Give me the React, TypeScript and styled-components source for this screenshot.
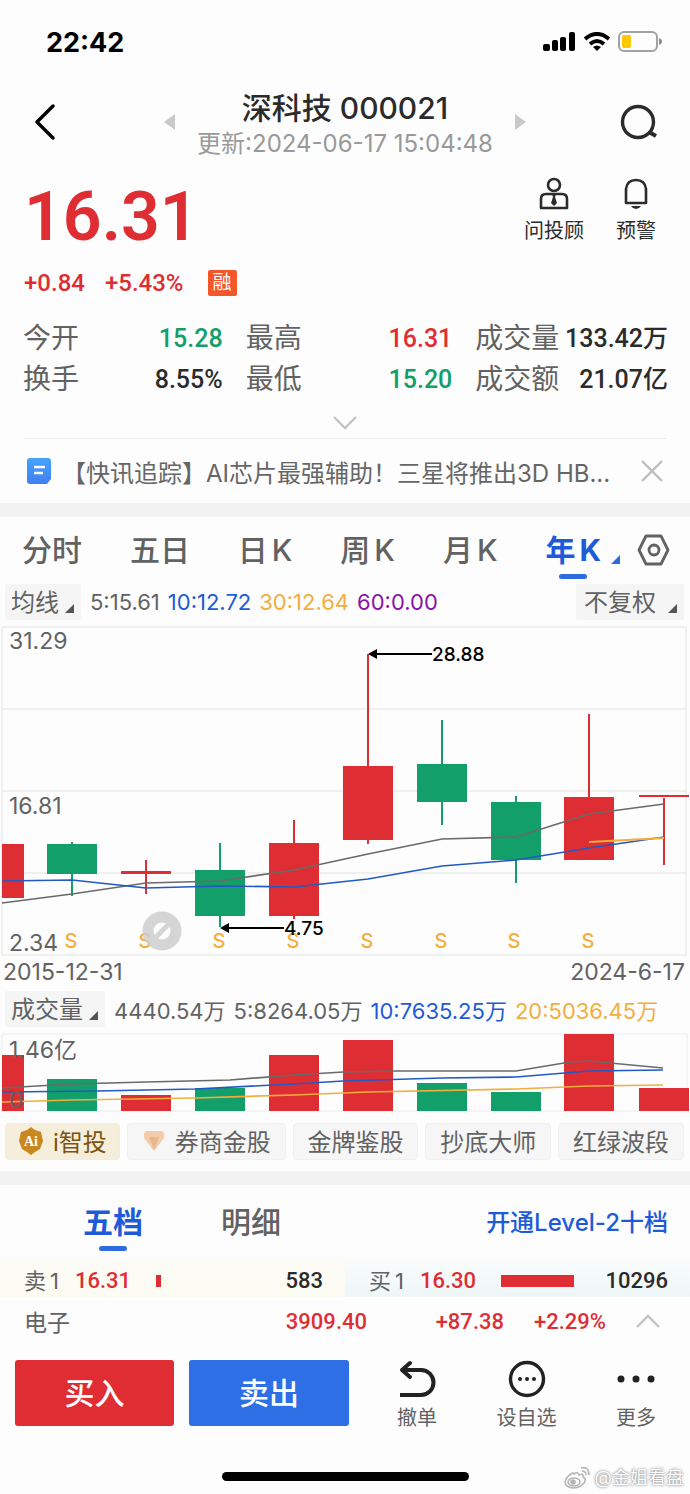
import React from 'react';
import styled, { createGlobalStyle } from 'styled-components';

const RED = '#df2e33';
const GREEN = '#129f69';
const BLUE = '#1e5bd8';
const ORANGE = '#f3ae3d';
const GRAY = '#626262';
const DARK = '#2b2b2b';
const SANS = "Inter, 'Noto Sans CJK SC', sans-serif";
const DIGITS = "Roboto, 'Noto Sans CJK SC', sans-serif";

const GlobalStyle = createGlobalStyle`
  * { box-sizing: border-box; }
  body { margin: 0; background: #fdfdfd; font-family: ${SANS}; color: ${DARK}; }
  button, select { font: inherit; color: inherit; border: 0; background: none; padding: 0; margin: 0; cursor: pointer; }
  a { color: inherit; text-decoration: none; }
  dl, dt, dd, ul, h1, p { margin: 0; padding: 0; }
  svg { display: block; flex: none; }
`;

const Page = styled.div`
  position: relative;
  display: flex;
  flex-direction: column;
  width: 100%;
`;

const StatusBar = styled.div`
  display: flex;
  align-items: center;
  justify-content: space-between;
  height: 84px;
  padding: 0 27px 0 46px;
  color: #000;
`;
const Clock = styled.time`
  font-size: 27px;
  font-weight: 700;
`;
const StatusIcons = styled.div`
  display: flex;
  align-items: center;
  gap: 8px;
`;

const Header = styled.header`
  display: flex;
  align-items: center;
  justify-content: space-between;
  height: 76px;
  padding: 0 32px;
`;
const IconButton = styled.button`
  display: flex;
  align-items: center;
  justify-content: center;
`;
const TitleGroup = styled.div`
  display: flex;
  align-items: center;
  justify-content: space-between;
  width: 364px;
`;
const TitleText = styled.div`
  display: flex;
  flex-direction: column;
  align-items: center;
  padding-top: 6px;
`;
const Title = styled.h1`
  font-size: 30px;
  line-height: 38px;
  font-weight: 500;
`;
const Updated = styled.p`
  font-size: 24px;
  line-height: 34px;
  color: #999;
`;

const Quote = styled.section`
  display: flex;
  justify-content: space-between;
  height: 158px;
  padding: 17px 34px 0 24px;
`;
const Price = styled.div`
  font-family: ${DIGITS};
  font-size: 68px;
  line-height: 80px;
  font-weight: 600;
  color: ${RED};
`;
const Changes = styled.div`
  display: flex;
  align-items: center;
  gap: 20px;
  margin-top: 10px;
  font-family: ${DIGITS};
  font-size: 24px;
  line-height: 32px;
  font-weight: 500;
  color: ${RED};
`;
const MarginBadge = styled.span`
  margin-left: 4px;
  padding: 0 5px;
  border-radius: 2px;
  background: #f4552b;
  color: #fff;
  font-size: 19px;
  line-height: 26px;
  font-weight: 400;
`;
const QuoteActions = styled.div`
  display: flex;
  align-items: flex-start;
  gap: 32px;
`;
const ActionButton = styled.button<{ $tone?: string }>`
  display: flex;
  flex-direction: column;
  align-items: center;
  gap: 7px;
  font-size: 20px;
  line-height: 26px;
  color: ${(p) => p.$tone || DARK};
`;

const Stats = styled.dl`
  display: grid;
  grid-template-columns: 200fr 207fr 193fr;
  column-gap: 23px;
  padding: 0 22px 0 23px;
`;
const Stat = styled.div`
  display: flex;
  justify-content: space-between;
  height: 41px;
  font-size: 28px;
  line-height: 41px;
  white-space: nowrap;
  dt { color: ${GRAY}; }
`;
const StatValue = styled.dd<{ $color?: string }>`
  font-family: ${DIGITS};
  font-size: 25px;
  font-weight: 500;
  color: ${(p) => p.$color || DARK};
`;
const Expand = styled.button`
  display: flex;
  justify-content: center;
  height: 39px;
  margin: 0 24px;
  padding-top: 16px;
  border-bottom: 1px solid #ececec;
`;

const News = styled.div`
  display: flex;
  align-items: center;
  height: 64px;
  padding: 0 26px;
`;
const Headline = styled.a`
  flex: 1;
  min-width: 0;
  margin: 0 8px 0 10px;
  overflow: hidden;
  text-overflow: ellipsis;
  white-space: nowrap;
  font-size: 24px;
  color: #666;
`;
const Divider = styled.div`
  height: 14px;
  background: #f2f2f2;
`;

const PeriodTabs = styled.nav`
  display: flex;
  align-items: center;
  justify-content: space-between;
  height: 65px;
  padding: 0 20px 0 22px;
`;
const Tab = styled.button<{ $active?: boolean }>`
  position: relative;
  display: flex;
  gap: 4px;
  font-size: 30px;
  line-height: 58px;
  font-weight: ${(p) => (p.$active ? 700 : 500)};
  color: ${(p) => (p.$active ? BLUE : GRAY)};
  &::after {
    content: '';
    display: ${(p) => (p.$active ? 'block' : 'none')};
    position: absolute;
    left: 50%;
    bottom: 0;
    width: 28px;
    height: 5px;
    margin-left: -14px;
    border-radius: 3px;
    background: #2f6be0;
  }
`;
const TabTools = styled.div`
  display: flex;
  align-items: center;
  gap: 10px;
`;
const Corner = styled.span<{ $color?: string }>`
  width: 0;
  height: 0;
  border-left: 9px solid transparent;
  border-bottom: 9px solid ${(p) => p.$color || '#555'};
  ${TabTools} > & { margin-top: 20px; }
`;

const Legend = styled.div`
  display: flex;
  align-items: center;
  height: 44px;
  padding: 0 6px 4px 5px;
`;
const Picker = styled.label<{ $wide?: boolean }>`
  position: relative;
  display: flex;
  border-radius: 3px;
  background: #f5f5f5;
  color: ${GRAY};
  select {
    appearance: none;
    height: 36px;
    padding: 0 ${(p) => (p.$wide ? 28 : 22)}px 0 ${(p) => (p.$wide ? 8 : 6)}px;
    font-size: 24px;
    outline: none;
  }
  ${Corner} {
    position: absolute;
    right: 7px;
    bottom: 7px;
    pointer-events: none;
  }
`;
const LegendValues = styled.div`
  display: flex;
  flex: 1;
  gap: 8px;
  margin-left: 9px;
  font-size: 22px;
  white-space: nowrap;
`;
const LegendValue = styled.span<{ $color: string }>`
  color: ${(p) => p.$color};
`;

const Chart = styled.svg`
  width: 100%;
  height: auto;
  font-family: ${SANS};
`;
const DateAxis = styled.div`
  display: flex;
  justify-content: space-between;
  height: 33px;
  padding: 0 5px 0 3px;
  font-size: 23px;
  line-height: 32px;
  color: ${GRAY};
`;

const Chips = styled.div`
  display: flex;
  justify-content: space-between;
  gap: 7px;
  height: 59px;
  padding: 11px 6px 11px 5px;
`;
const Chip = styled.button<{ $gold?: boolean }>`
  display: flex;
  flex: ${(p) => (p.$gold ? '0 0 auto' : '1 0 auto')};
  align-items: center;
  justify-content: center;
  gap: 9px;
  height: 37px;
  padding: 0 12px 2px;
  border: 1px solid ${(p) => (p.$gold ? '#f3edd6' : '#f0f0f0')};
  border-radius: 4px;
  background: ${(p) => (p.$gold ? '#f4eedb' : '#f6f6f6')};
  color: ${(p) => (p.$gold ? '#7b5414' : GRAY)};
  font-size: 24px;
`;

const BookTabs = styled.nav`
  display: flex;
  align-items: center;
  gap: 78px;
  height: 74px;
  padding: 0 22px 0 83px;
`;
const BookLink = styled.a`
  margin-left: auto;
  padding-bottom: 4px;
  font-size: 24px;
  font-weight: 500;
  color: ${BLUE};
`;
const BookRow = styled.div`
  display: grid;
  grid-template-columns: 1fr 1fr;
`;
const Side = styled.div<{ $buy?: boolean }>`
  display: grid;
  grid-template-columns: 51px 81px 1fr auto;
  align-items: center;
  height: 38px;
  padding: 6px 22px 0 24px;
  background: ${(p) => (p.$buy ? 'linear-gradient(#fafcfc, #eef6f8)' : 'linear-gradient(#fcfcf6, #fcfbf2)')};
  font-family: ${DIGITS};
  font-size: 22px;
  line-height: 30px;
  font-weight: 500;
`;
const SideLabel = styled.span`
  display: flex;
  gap: 4px;
  font-family: ${SANS};
  font-weight: 400;
  color: ${GRAY};
`;
const RedText = styled.span`
  color: ${RED};
`;
const Depth = styled.span`
  height: 12px;
  background: ${RED};
`;

const Sector = styled.div`
  display: grid;
  grid-template-columns: 1fr 137px 102px 54px;
  align-items: center;
  height: 50px;
  padding: 0 30px 2px 24px;
  font-family: ${DIGITS};
  font-size: 22px;
  font-weight: 500;
  text-align: right;
  ${IconButton} { justify-content: flex-end; }
`;
const SectorNames = styled.div`
  display: flex;
  align-items: center;
  justify-content: space-between;
  a { font-family: ${SANS}; font-size: 23px; font-weight: 400; color: ${GRAY}; }
`;

const Toolbar = styled.div`
  display: grid;
  grid-template-columns: 159px 160px 1fr;
  gap: 15px;
  height: 110px;
  padding: 13px 34px 0 15px;
`;
const TradeButton = styled.button<{ $color: string }>`
  height: 66px;
  padding-bottom: 4px;
  border-radius: 3px;
  background: ${(p) => p.$color};
  color: #fff;
  font-size: 30px;
  font-weight: 500;
`;
const Tools = styled.div`
  display: flex;
  justify-content: space-between;
  height: 72px;
  padding-left: 33px;
`;
const HomeArea = styled.footer`
  display: flex;
  align-items: flex-end;
  justify-content: center;
  height: 38px;
  padding-bottom: 14px;
`;
const HomeIndicator = styled.div`
  width: 247px;
  height: 9px;
  border-radius: 5px;
  background: #000;
`;
const Credit = styled.div`
  position: absolute;
  right: 6px;
  bottom: 4px;
  display: flex;
  align-items: center;
  gap: 4px;
  color: #fff;
  font-size: 18px;
  line-height: 26px;
  text-shadow: 0 0 3px #888, 0 0 1px #999;
`;

type Candle = { x: number; top: number; bottom: number; high: number; low: number; up: boolean };

const candles: Candle[] = [
  { x: -1, top: 218, bottom: 272, high: 218, low: 272, up: true },
  { x: 72, top: 218, bottom: 248, high: 216, low: 270, up: false },
  { x: 146, top: 245, bottom: 248, high: 234, low: 268, up: true },
  { x: 220, top: 244, bottom: 290, high: 217, low: 301, up: false },
  { x: 294, top: 217, bottom: 290, high: 194, low: 293, up: true },
  { x: 368, top: 140, bottom: 214, high: 28, low: 218, up: true },
  { x: 442, top: 138, bottom: 176, high: 94, low: 199, up: false },
  { x: 516, top: 176, bottom: 234, high: 170, low: 257, up: false },
  { x: 589, top: 171, bottom: 234, high: 88, low: 234, up: true },
  { x: 664, top: 169, bottom: 171, high: 172, low: 239, up: true },
];

const volumes = [
  { x: -1, top: 22, up: true },
  { x: 72, top: 46, up: false },
  { x: 146, top: 62, up: true },
  { x: 220, top: 55, up: false },
  { x: 294, top: 22, up: true },
  { x: 368, top: 7, up: true },
  { x: 442, top: 50, up: false },
  { x: 516, top: 59, up: false },
  { x: 589, top: 1, up: true },
  { x: 664, top: 55, up: true },
];

const signals = [71, 145, 219, 293, 367, 441, 514, 588];

function PriceChart() {
  return (
    <Chart viewBox="0 0 690 330" role="img" aria-label="年K线图">
      <g stroke="#ececec" strokeWidth="1.5" fill="none">
        <path d="M2 1H687M2 83H687M2 165H687M2 247H687M2 329H687M2 1V329M686 1V329" />
      </g>
      <g fontSize="23" fill={GRAY}>
        <text x="9" y="23">31.29</text>
        <text x="9" y="188">16.81</text>
        <text x="9" y="325">2.34</text>
      </g>
      {candles.map((c) => (
        <g key={c.x} fill={c.up ? RED : GREEN}>
          <rect x={Math.max(c.x - 25, 2)} y={c.top} width={c.x < 0 ? 22 : 50} height={c.bottom - c.top} />
          {c.x > 0 && <rect x={c.x - 1} y={c.high} width="2" height={c.low - c.high} />}
        </g>
      ))}
      <g fill="none" strokeWidth="1.7">
        <path stroke="#6a6a6a" d="M2 277L72 268L146 257L220 255L294 244L368 228L442 213L516 211L589 188L664 178" />
        <path stroke="#2259c4" d="M2 255L72 254L146 262L220 260L294 261L368 253L442 240L516 234L589 222L664 211" />
        <path stroke={ORANGE} strokeWidth="2" d="M589 216L664 212" />
      </g>
      <g fontSize="20" fontWeight="500" fill={ORANGE} textAnchor="middle">
        {signals.map((x) => (
          <text key={x} x={x} y="322">S</text>
        ))}
      </g>
      <g opacity="0.85">
        <circle cx="162" cy="305" r="14" fill="#fdfdfd" fillOpacity="0.7" stroke="#cfcfcf" strokeWidth="11" />
        <path d="M155 312L169 298" stroke="#cfcfcf" strokeWidth="5" />
      </g>
      <g stroke="#000" strokeWidth="2">
        <path d="M374 28H432M226 302H284" />
        <path d="M368 28L377 23V33ZM220 302L229 297V307Z" stroke="none" />
      </g>
      <g fontSize="19" fontWeight="500" fill="#000">
        <text x="432" y="35">28.88</text>
        <text x="284" y="309">4.75</text>
      </g>
    </Chart>
  );
}

function VolumeChart() {
  return (
    <Chart viewBox="0 0 690 79" role="img" aria-label="成交量图">
      <path d="M2 1H687V78H2Z" stroke="#ececec" fill="none" />
      {volumes.map((v) => (
        <rect
          key={v.x}
          x={Math.max(v.x - 25, 2)}
          y={v.top}
          width={v.x < 0 ? 22 : 50}
          height={78 - v.top}
          fill={v.up ? RED : GREEN}
        />
      ))}
      <g fill="none" strokeWidth="1.7">
        <path stroke="#6a6a6a" d="M2 55L72 51L146 49L230 47L294 42L343 39L393 38L516 38L570 29L589 28L663 35" />
        <path stroke="#2259c4" d="M2 59L97 58L195 56L294 51L343 48L442 45L516 44L589 38L663 37" />
        <path stroke={ORANGE} d="M2 69L72 67L195 65L294 62L368 59L516 56L589 53L663 52" />
      </g>
      <g fontSize="23" fill={GRAY}>
        <text x="9" y="25">1.46亿</text>
        <text x="9" y="75">0</text>
      </g>
    </Chart>
  );
}

export default function App() {
  return (
    <Page>
      <GlobalStyle />
      <StatusBar>
        <Clock>22:42</Clock>
        <StatusIcons>
          <svg width="33" height="20" viewBox="0 0 33 20">
            <rect x="0" y="12" width="7" height="7" rx="2" />
            <rect x="9" y="8" width="6" height="11" rx="2" />
            <rect x="17" y="5" width="6" height="14" rx="2" />
            <rect x="26" y="0" width="6" height="19" rx="2" />
          </svg>
          <svg width="26" height="20" viewBox="0 0 26 20" fill="none" stroke="#000" strokeWidth="4">
            <path d="M1 7Q13 -3 25 7" />
            <path d="M6 12Q13 6 20 12" />
            <path d="M9 15Q13 12 17 15L13 19Z" fill="#000" stroke="none" />
          </svg>
          <svg width="45" height="22" viewBox="0 0 45 22">
            <rect x="1" y="1" width="38" height="19" rx="5" fill="none" stroke="#a2a2a2" strokeWidth="2" />
            <rect x="4" y="4" width="9" height="13" rx="2" fill="#fcc800" />
            <path d="M41 7Q44 8 44 11Q44 13 41 14Z" fill="#8c8c8c" />
          </svg>
        </StatusIcons>
      </StatusBar>

      <Header>
        <IconButton aria-label="返回">
          <svg width="38" height="36" viewBox="0 0 38 36" fill="none" stroke="#000" strokeWidth="3.4" strokeLinecap="round" strokeLinejoin="round">
            <path d="M21 2L5 18L21 34" />
          </svg>
        </IconButton>
        <TitleGroup>
          <IconButton aria-label="上一只">
            <svg width="12" height="18" viewBox="0 0 12 18" fill="#c9c9c9"><path d="M12 1V17L1 9Z" /></svg>
          </IconButton>
          <TitleText>
            <Title>深科技 000021</Title>
            <Updated>更新:2024-06-17 15:04:48</Updated>
          </TitleText>
          <IconButton aria-label="下一只">
            <svg width="12" height="18" viewBox="0 0 12 18" fill="#c9c9c9"><path d="M0 1V17L11 9Z" /></svg>
          </IconButton>
        </TitleGroup>
        <IconButton aria-label="搜索">
          <svg width="38" height="36" viewBox="0 0 38 36" fill="none" stroke={DARK} strokeWidth="3.4">
            <circle cx="18" cy="18" r="15.5" />
            <path d="M29 28L36 32" strokeWidth="4" />
          </svg>
        </IconButton>
      </Header>

      <Quote>
        <div>
          <Price>16.31</Price>
          <Changes>
            <span>+0.84</span>
            <span>+5.43%</span>
            <MarginBadge>融</MarginBadge>
          </Changes>
        </div>
        <QuoteActions>
          <ActionButton>
            <svg width="30" height="34" viewBox="0 0 30 34" fill="none" stroke={DARK} strokeWidth="2.6">
              <circle cx="15" cy="8" r="6" />
              <path d="M2 31V22Q2 17 7 17H23Q28 17 28 22V31Z" strokeLinejoin="round" />
              <path d="M13 17H17L16 20L18 26L15 29L12 26L14 20Z" fill={DARK} stroke="none" />
            </svg>
            问投顾
          </ActionButton>
          <ActionButton>
            <svg width="26" height="34" viewBox="0 0 26 34" fill="none" stroke={DARK} strokeWidth="2.6">
              <path d="M3 26V12Q4 3 13 3Q22 3 23 12V26Z" strokeLinejoin="round" />
              <path d="M8 29H18Q16 32 13 32Q10 32 8 29Z" fill={DARK} stroke="none" />
            </svg>
            预警
          </ActionButton>
        </QuoteActions>
      </Quote>

      <Stats>
        <Stat><dt>今开</dt><StatValue $color={GREEN}>15.28</StatValue></Stat>
        <Stat><dt>最高</dt><StatValue $color={RED}>16.31</StatValue></Stat>
        <Stat><dt>成交量</dt><StatValue>133.42万</StatValue></Stat>
        <Stat><dt>换手</dt><StatValue>8.55%</StatValue></Stat>
        <Stat><dt>最低</dt><StatValue $color={GREEN}>15.20</StatValue></Stat>
        <Stat><dt>成交额</dt><StatValue>21.07亿</StatValue></Stat>
      </Stats>
      <Expand aria-label="展开">
        <svg width="24" height="14" viewBox="0 0 24 14" fill="none" stroke="#c4c4c4" strokeWidth="2.4"><path d="M1 1L12 12L23 1" /></svg>
      </Expand>

      <News>
        <svg width="26" height="28" viewBox="0 0 26 28">
          <defs>
            <linearGradient id="doc" x1="0" y1="0" x2="0" y2="1">
              <stop offset="0" stopColor="#46a4fb" />
              <stop offset="1" stopColor="#3f7ff2" />
            </linearGradient>
          </defs>
          <path d="M4 1H22Q25 1 25 4V22L21 27H4Q1 27 1 24V4Q1 1 4 1Z" fill="url(#doc)" />
          <path d="M8 10H19M8 16H17" stroke="#fff" strokeWidth="2.6" />
        </svg>
        <Headline href="#news">【快讯追踪】AI芯片最强辅助！三星将推出3D HB...</Headline>
        <IconButton aria-label="关闭">
          <svg width="24" height="24" viewBox="0 0 24 24" stroke="#bdbdbd" strokeWidth="2.4"><path d="M2 2L22 22M22 2L2 22" /></svg>
        </IconButton>
      </News>
      <Divider />

      <PeriodTabs>
        <Tab>分时</Tab>
        <Tab>五日</Tab>
        <Tab>日<span>K</span></Tab>
        <Tab>周<span>K</span></Tab>
        <Tab>月<span>K</span></Tab>
        <TabTools>
          <Tab $active>年<span>K</span></Tab>
          <Corner $color="#2f6be0" />
          <IconButton aria-label="设置">
            <svg width="40" height="32" viewBox="0 0 40 32" fill="none" stroke={GRAY} strokeWidth="2.8" strokeLinejoin="round">
              <path d="M16 2H31L38 16L31 30H16L9 16Z" />
              <circle cx="24" cy="16" r="5" />
            </svg>
          </IconButton>
        </TabTools>
      </PeriodTabs>

      <Legend>
        <Picker>
          <select aria-label="指标"><option>均线</option></select>
          <Corner />
        </Picker>
        <LegendValues>
          <LegendValue $color={GRAY}>5:15.61</LegendValue>
          <LegendValue $color={BLUE}>10:12.72</LegendValue>
          <LegendValue $color={ORANGE}>30:12.64</LegendValue>
          <LegendValue $color="#8a12a8">60:0.00</LegendValue>
        </LegendValues>
        <Picker $wide>
          <select aria-label="复权"><option>不复权</option></select>
          <Corner />
        </Picker>
      </Legend>
      <PriceChart />
      <DateAxis>
        <span>2015-12-31</span>
        <span>2024-6-17</span>
      </DateAxis>

      <Legend>
        <Picker>
          <select aria-label="副图指标"><option>成交量</option></select>
          <Corner />
        </Picker>
        <LegendValues>
          <LegendValue $color={GRAY}>4440.54万</LegendValue>
          <LegendValue $color={GRAY}>5:8264.05万</LegendValue>
          <LegendValue $color={BLUE}>10:7635.25万</LegendValue>
          <LegendValue $color={ORANGE}>20:5036.45万</LegendValue>
        </LegendValues>
      </Legend>
      <VolumeChart />

      <Chips>
        <Chip $gold>
          <svg width="26" height="28" viewBox="0 0 26 28">
            <path d="M13 0L17 3L23 5L25 14L22 22L17 25L13 28L9 25L4 22L1 14L3 5L9 3Z" fill="#c8881f" />
            <text x="13" y="19" textAnchor="middle" fontSize="14" fontWeight="700" fontFamily="'Liberation Serif', serif" fill="#fff">Ai</text>
          </svg>
          i智投
        </Chip>
        <Chip>
          <svg width="24" height="22" viewBox="0 0 24 22">
            <path d="M4 1H20Q23 3 22 8L12 21L2 8Q1 3 4 1Z" fill="#f3cdab" />
            <path d="M7 7H17L12 20Z" fill="#e9b68d" />
          </svg>
          券商金股
        </Chip>
        <Chip>金牌鉴股</Chip>
        <Chip>抄底大师</Chip>
        <Chip>红绿波段</Chip>
      </Chips>
      <Divider />

      <BookTabs>
        <Tab $active>五档</Tab>
        <Tab>明细</Tab>
        <BookLink href="#level2">开通Level-2十档</BookLink>
      </BookTabs>
      <BookRow>
        <Side>
          <SideLabel>卖<span>1</span></SideLabel>
          <RedText>16.31</RedText>
          <Depth style={{ width: 5 }} />
          <span>583</span>
        </Side>
        <Side $buy>
          <SideLabel>买<span>1</span></SideLabel>
          <RedText>16.30</RedText>
          <Depth style={{ width: 73 }} />
          <span>10296</span>
        </Side>
      </BookRow>
      <Sector>
        <SectorNames>
          <a href="#sector">电子</a>
          <RedText>3909.40</RedText>
        </SectorNames>
        <RedText>+87.38</RedText>
        <RedText>+2.29%</RedText>
        <IconButton aria-label="收起">
          <svg width="24" height="14" viewBox="0 0 24 14" fill="none" stroke="#c4c4c4" strokeWidth="2.4"><path d="M1 13L12 2L23 13" /></svg>
        </IconButton>
      </Sector>

      <Toolbar>
        <TradeButton $color="#e02d33">买入</TradeButton>
        <TradeButton $color="#2f6fe6">卖出</TradeButton>
        <Tools>
          <ActionButton $tone={GRAY}>
            <svg width="38" height="38" viewBox="0 0 38 38" fill="none" stroke="#222" strokeWidth="4">
              <path d="M6 10H23A12.5 12.5 0 0 1 23 35H2" />
              <path d="M12 3L4 10L12 17" strokeLinecap="round" strokeLinejoin="round" />
            </svg>
            撤单
          </ActionButton>
          <ActionButton $tone={GRAY}>
            <svg width="38" height="38" viewBox="0 0 38 38" fill="#222">
              <circle cx="19" cy="19" r="16.5" fill="none" stroke="#222" strokeWidth="3.4" />
              <circle cx="12" cy="19" r="2" />
              <circle cx="19" cy="19" r="2" />
              <circle cx="26" cy="19" r="2" />
            </svg>
            设自选
          </ActionButton>
          <ActionButton $tone={GRAY}>
            <svg width="38" height="38" viewBox="0 0 38 38" fill="#222">
              <circle cx="4" cy="19" r="3.5" />
              <circle cx="19" cy="19" r="3.5" />
              <circle cx="34" cy="19" r="3.5" />
            </svg>
            更多
          </ActionButton>
        </Tools>
      </Toolbar>
      <HomeArea>
        <HomeIndicator />
      </HomeArea>
      <Credit>
        <svg width="27" height="24" viewBox="0 0 27 24" fill="none" stroke="#b5b5b5" strokeWidth="1.6">
          <path d="M10 8Q14 5 15 9Q20 7 19 11Q23 13 20 17Q16 22 9 22Q1 21 1 16Q2 11 7 8Q9 6 10 8Z" fill="#fff" />
          <ellipse cx="10" cy="16" rx="6" ry="4" />
          <circle cx="9" cy="16" r="2" fill="#b5b5b5" />
          <path d="M17 2Q25 0 25 9M18 5Q22 5 22 9" />
        </svg>
        @金姐看盘
      </Credit>
    </Page>
  );
}
